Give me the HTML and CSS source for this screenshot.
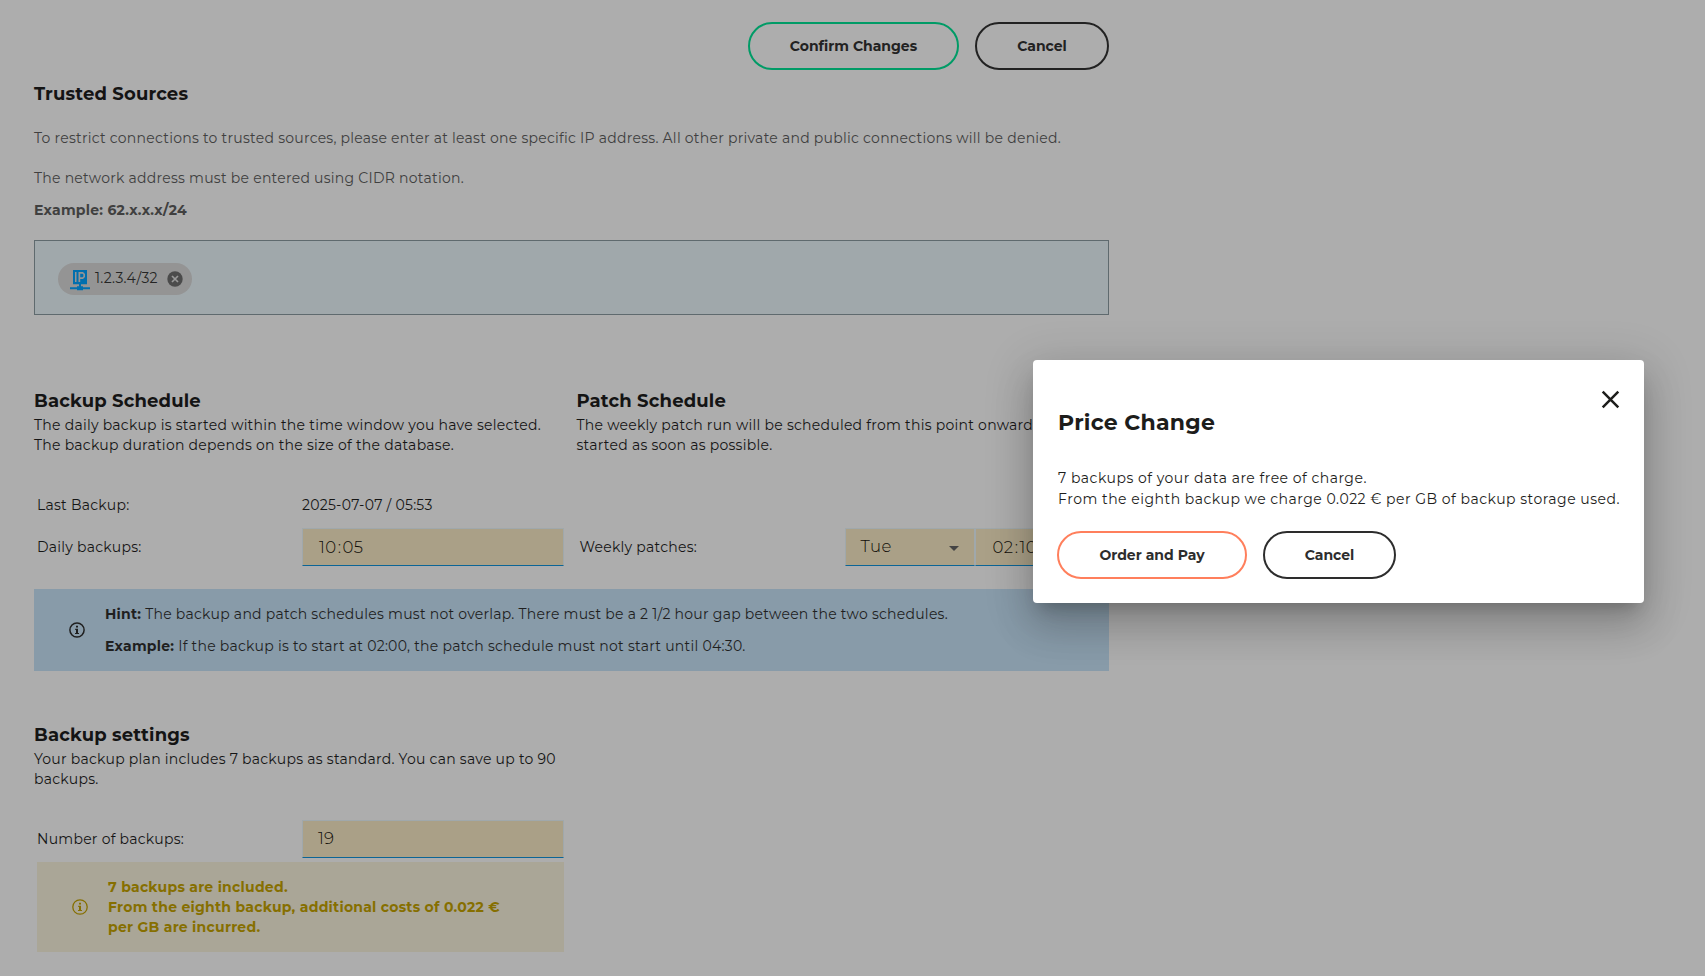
FILE: index.html
```
<!DOCTYPE html>
<html lang="en">
<head>
<meta charset="utf-8">
<title>Database settings</title>
<link rel="stylesheet" href="styles.css">
</head>
<body>
<main class="page">
  <div class="actions">
    <button class="btn btn-confirm">Confirm Changes</button>
    <button class="btn btn-cancel">Cancel</button>
  </div>

  <section class="sources">
    <h2 class="heading heading-first">Trusted Sources</h2>
    <p class="muted intro">To restrict connections to trusted sources, please enter at least one specific IP address. All other private and public connections will be denied.</p>
    <p class="muted notation">The network address must be entered using CIDR notation.</p>
    <p class="muted example">Example: 62.x.x.x/24</p>
    <div class="ip-box">
      <span class="chip">
        <svg class="chip-ip" viewBox="0 0 20 20"><path fill="#006fae" fill-rule="evenodd" d="M3 0h14v14.300h-6v2h2v1h7v2h-7v1H7v-1H0v-2h7v-1h2v-2H3zM5 2v10h1.500V2zM8.500 2v10h1.700V9H13l2-2V4l-2-2zM10.200 3.700h2.300l.900.800v2l-.900.800h-2.300z"/></svg>
        <span class="chip-text">1.2.3.4/32</span>
        <svg class="chip-remove" viewBox="0 0 16 16"><circle cx="8" cy="8" r="7.700" fill="#4b4b4b"/><path d="M5 5l6 6M11 5l-6 6" stroke="#999" stroke-width="1.700"/></svg>
      </span>
    </div>
  </section>

  <section class="schedules">
    <div class="column">
      <h2 class="heading">Backup Schedule</h2>
      <p class="body">The daily backup is started within the time window you have selected.<br>The backup duration depends on the size of the database.</p>
      <div class="row row-text"><span class="label">Last Backup:</span><span>2025-07-07 / 05:53</span></div>
      <div class="row row-field"><span class="label">Daily backups:</span><span class="field field-wide"><span>10<span class="colon">:</span>05</span></span></div>
    </div>
    <div class="column">
      <h2 class="heading">Patch Schedule</h2>
      <p class="body">The weekly patch run will be scheduled from this point onwards<br>started as soon as possible.</p>
      <div class="row row-text"></div>
      <div class="row row-field"><span class="label">Weekly patches:</span><span class="field field-day">Tue<svg class="caret" viewBox="0 0 10 5"><path d="M0 0h10L5 5z" fill="#444"/></svg></span><span class="field field-time"><span>02<span class="colon">:</span>10</span></span></div>
    </div>
  </section>

  <div class="hint">
    <svg class="info" viewBox="0 0 16 16"><circle cx="8" cy="8" r="7.100" fill="none" stroke="currentColor" stroke-width="1.500"/><path fill="currentColor" d="M7 3.700h2v1.900H7zM6.200 6.700H9v4.200h1v1.200H6v-1.200h1V7.900h-.800z"/></svg>
    <div class="hint-lines">
      <p><b>Hint:</b> The backup and patch schedules must not overlap. There must be a 2 1/2 hour gap between the two schedules.</p>
      <p><b>Example:</b> If the backup is to start at 02:00, the patch schedule must not start until 04:30.</p>
    </div>
  </div>

  <section class="settings">
    <h2 class="heading">Backup settings</h2>
    <p class="body">Your backup plan includes 7 backups as standard. You can save up to 90<br>backups.</p>
    <div class="row row-count"><span class="label">Number of backups:</span><span class="field field-wide field-count">19</span></div>
    <div class="warning">
      <svg class="info" viewBox="0 0 16 16"><circle cx="8" cy="8" r="7.200" fill="none" stroke="currentColor" stroke-width="1.300"/><path fill="currentColor" d="M7 3.700h2v1.900H7zM6.200 6.700H9v4.200h1v1.200H6v-1.200h1V7.900h-.800z"/></svg>
      <p>7 backups are included.<br>From the eighth backup, additional costs of 0.022 €<br>per GB are incurred.</p>
    </div>
  </section>
</main>

<div class="dialog" role="dialog" aria-label="Price Change">
  <svg class="close" viewBox="0 0 17 17"><path d="M.700.700l15.600 15.600M16.300.700L.700 16.300" stroke="#1d1d1b" stroke-width="2.500"/></svg>
  <h1 class="dialog-title">Price Change</h1>
  <p class="dialog-text">7 backups of your data are free of charge.</p>
  <p class="dialog-text">From the eighth backup we charge 0.022 € per GB of backup storage used.</p>
  <div class="dialog-actions">
    <button class="btn btn-order">Order and Pay</button>
    <button class="btn btn-cancel btn-light">Cancel</button>
  </div>
</div>
</body>
</html>
```
FILE: styles.css
```
* { box-sizing: border-box; }
html { overflow: hidden; }
body {
  margin: 0;
  height: 976px;
  overflow: hidden;
  background: #adadad;
  color: #151515;
  font: 400 14px/20px Montserrat, Inter, sans-serif;
  letter-spacing: .255px;
}
h1, h2, p { margin: 0; white-space: nowrap; }
svg { display: block; flex: none; }

.page { width: 1109px; padding: 22px 0 0 34px; }
.actions { display: flex; justify-content: flex-end; gap: 16px; }
.btn {
  height: 48px;
  padding: 0;
  border: 2px solid;
  border-radius: 24px;
  background: none;
  color: #222;
  font: inherit;
  font-weight: 700;
  letter-spacing: 0;
  white-space: nowrap;
}
.btn-confirm { width: 211px; border-color: #009b66; }
.btn-cancel { width: 134px; border-color: #222; }
.btn-order { width: 190px; border-color: #ff7f5c; color: #2d2d2d; }
.btn-light { width: 133px; border-color: #2d2d2d; color: #2d2d2d; }

.heading { color: #141414; font-size: 18px; line-height: 24px; letter-spacing: .16px; }
.heading-first { margin-top: 12px; }
.muted { color: #404040; }
.intro { margin-top: 22px; }
.notation { margin-top: 20px; }
.example { margin-top: 12px; font-weight: 700; }

.ip-box {
  display: flex;
  align-items: center;
  height: 75px;
  margin-top: 20px;
  padding: 2px 0 0 23px;
  border: 1px solid #5f6a6e;
  background: #a0a8ab;
}
.chip {
  display: flex;
  align-items: center;
  width: 134px;
  height: 32px;
  padding-left: 12px;
  border-radius: 16px;
  background: #949494;
  color: #242424;
}
.chip-ip { width: 20px; height: 20px; margin-top: 2px; overflow: visible; }
.chip-text { width: 72.500px; padding-left: 5px; margin-top: -2px; }
.chip-remove { width: 16px; height: 16px; margin-left: 4px; }

.schedules { display: grid; grid-template-columns: 542.500px 532.500px; margin-top: 74px; }
.body { margin-top: 2px; }
.row { display: flex; align-items: center; padding-left: 3px; }
.row-text { height: 20px; margin-top: 40px; }
.row-field { height: 38px; margin-top: 13px; }
.row-count { height: 38px; margin-top: 31px; }
.label { width: 265px; }
.field {
  display: flex;
  align-items: center;
  height: 38px;
  padding: 0 0 1px 16px;
  border: 1px solid #a0a8ab;
  border-bottom-color: #0c6596;
  background: #aaa087;
  color: #100e08;
  font-size: 16.5px;
  font-weight: 300;
  letter-spacing: .5px;
}
.colon { padding: 0 1px; }
.field-wide { width: 261.500px; }
.field-count { padding: 0 0 3px 15px; letter-spacing: .1px; }
.field-day { width: 130px; padding: 0 15px 3px 15px; justify-content: space-between; }
.field-time { flex: 1; padding-left: 17px; }
.caret { width: 10px; height: 5px; margin-top: 5px; }

.hint {
  display: flex;
  align-items: center;
  height: 82px;
  margin-top: 23px;
  padding-left: 35px;
  background: #889ba9;
  color: #1f1f1f;
}
.info { width: 16px; height: 16px; overflow: visible; }
.hint-lines { display: grid; gap: 12px; margin-left: 20px; }

.settings { margin-top: 52px; }
.warning {
  display: flex;
  align-items: center;
  width: 527px;
  height: 90px;
  margin: 4px 0 0 3px;
  padding-left: 35px;
  background: #aaa697;
  color: #866f00;
  font-weight: 700;
}
.warning p { margin-left: 20px; }

.dialog {
  position: absolute;
  left: 1033px;
  top: 360px;
  width: 611px;
  height: 243px;
  padding: 48px 24px 24px 25px;
  border-radius: 4px;
  background: #fff;
  color: #1d1d1b;
  box-shadow: 0 11px 15px -7px rgba(0, 0, 0, .2), 0 24px 38px 3px rgba(0, 0, 0, .14), 0 9px 46px 8px rgba(0, 0, 0, .12);
}
.close { position: absolute; right: 25px; top: 30.500px; width: 17px; height: 17px; overflow: visible; }
.dialog-title { margin-bottom: 30px; font-size: 22px; line-height: 30px; letter-spacing: .25px; }
.dialog-text { line-height: 21px; letter-spacing: .5px; }
.dialog-actions { display: flex; gap: 16px; margin: 21px 0 0 -1px; }
```
